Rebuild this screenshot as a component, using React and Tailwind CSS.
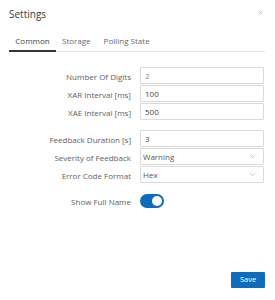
import React, { useState } from 'react';
import { X, ChevronDown } from 'lucide-react';

const font = { fontFamily: '"Open Sans", "Noto Sans", sans-serif' };

const TextField = ({ value, muted }) => (
  <div className={`h-[17px] border border-[#dadada] rounded-[1px] flex items-center px-[4px] text-[8px] ${muted ? 'text-[#888]' : 'text-[#444]'}`}>
    {value}
  </div>
);

const SelectField = ({ value }) => (
  <div className="h-[17px] border border-[#dadada] rounded-[1px] flex items-center justify-between pl-[2px] pr-[6px] text-[8px] text-[#555]">
    <span>{value}</span>
    <ChevronDown className="w-[9px] h-[9px] text-[#888]" strokeWidth={1.25} />
  </div>
);

const Row = ({ label, children }) => (
  <div className="grid grid-cols-[131px_124px] gap-x-[9px] items-center">
    <span className="text-right text-[8px] text-[#5e5e5e] pt-[2px] whitespace-nowrap">{label}</span>
    {children}
  </div>
);

export default function App() {
  const [tab, setTab] = useState('Common');
  const [fullName, setFullName] = useState(true);
  const tabs = ['Common', 'Storage', 'Polling State'];

  return (
    <div className="w-[275px] h-[300px] bg-white flex flex-col relative" style={font}>
      {/* header */}
      <div className="flex items-start justify-between pl-[9px] pr-[11px] pt-[7px] h-[24px]">
        <span className="text-[10px] text-[#3a3a3a]">Settings</span>
        <X className="w-[7px] h-[7px] text-[#999] mt-[2px]" strokeWidth={1.75} />
      </div>

      {/* tabs */}
      <div className="mx-[9px] mr-[10px] mt-[11px] flex border-b border-[#e4e4e4]">
        {tabs.map((t, i) => (
          <button
            key={t}
            onClick={() => setTab(t)}
            className={`text-[8px] h-[17px] -mb-px flex items-start ${i === 0 ? 'w-[47px] justify-center' : i === 1 ? 'ml-[6px] mr-[13px]' : ''} ${tab === t ? 'text-[#444] border-b-2 border-[#333]' : 'text-[#6a6a6a] border-b-2 border-transparent'}`}
          >
            {t}
          </button>
        ))}
      </div>

      {/* form */}
      <div className="flex flex-col gap-y-[1px] mt-[15px]">
        <Row label="Number Of Digits"><TextField value="2" muted /></Row>
        <Row label="XAR Interval [ms]"><TextField value="100" /></Row>
        <Row label="XAE Interval [ms]"><TextField value="500" /></Row>
      </div>

      <div className="flex flex-col gap-y-[1px] mt-[10px]">
        <Row label="Feedback Duration [s]"><TextField value="3" /></Row>
        <Row label="Severity of Feedback"><SelectField value="Warning" /></Row>
        <Row label="Error Code Format"><SelectField value="Hex" /></Row>
      </div>

      <div className="mt-[11px]">
        <Row label="Show Full Name">
          <button
            onClick={() => setFullName(v => !v)}
            className={`w-[24px] h-[14px] rounded-full flex items-center px-[2px] ${fullName ? 'bg-[#0f6cbd] justify-end' : 'bg-[#ccc] justify-start'}`}
          >
            <span className="w-[10px] h-[10px] rounded-full bg-white" />
          </button>
        </Row>
      </div>

      <div className="flex justify-end pr-[10px] mt-auto mb-[12px]">
        <button className="w-[34px] h-[16px] bg-[#0f6cbd] text-white text-[7.5px] rounded-[1px] flex items-center justify-center">
          Save
        </button>
      </div>
    </div>
  );
}
